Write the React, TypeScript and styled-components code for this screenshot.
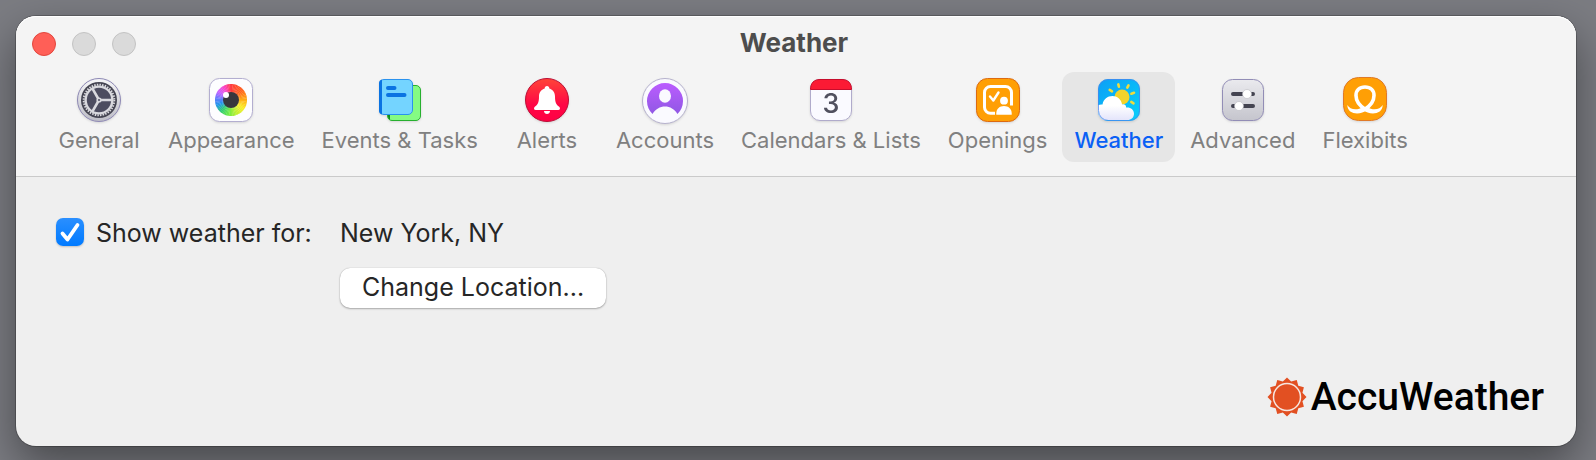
import React from "react";
import styled, { createGlobalStyle } from "styled-components";

const GlobalStyle = createGlobalStyle`
  * { box-sizing: border-box; }
  body {
    margin: 0;
    background: #7b7c82;
    font-family: Inter, "Liberation Sans", sans-serif;
  }
`;

const Desktop = styled.div`
  display: flex;
  min-height: 100vh;
  padding: 16px 20px 14px 16px;
  overflow: hidden;
`;

const Window = styled.main`
  flex: 1;
  display: flex;
  flex-direction: column;
  border-radius: 20px;
  background: #efefef;
  box-shadow: 0 0 0 1px rgba(0, 0, 0, 0.22), 0 18px 44px rgba(0, 0, 0, 0.42);
`;

const Header = styled.header`
  border-radius: 20px 20px 0 0;
  border-bottom: 1px solid #cacaca;
  background: #f4f4f4;
  box-shadow: inset 0 1px 0 #ffffff;
  padding-bottom: 14px;
`;

const TitleBar = styled.div`
  display: grid;
  grid-template-columns: 1fr auto 1fr;
  align-items: center;
  height: 56px;
  padding: 0 20px 0 16px;
`;

const Lights = styled.div`
  display: flex;
  gap: 16px;
`;

const Light = styled.button<{ $close?: boolean }>`
  width: 24px;
  height: 24px;
  padding: 0;
  border-radius: 50%;
  border: 1px solid ${(p) => (p.$close ? "#e2463d" : "#c3c3c3")};
  background: ${(p) => (p.$close ? "#ff5f57" : "#dadada")};
`;

const Title = styled.h1`
  margin: 0;
  font-size: 26px;
  line-height: 32px;
  font-weight: 700;
  color: #4d4d4d;
  padding-bottom: 2px;
`;

const Tabs = styled.nav`
  display: flex;
  gap: 3px;
  padding: 0 29px;
`;

const Tab = styled.button<{ $active?: boolean }>`
  display: flex;
  flex-direction: column;
  align-items: center;
  gap: 4px;
  min-width: 108px;
  padding: 6px 12px 8px;
  border: 0;
  border-radius: 12px;
  background: ${(p) => (p.$active ? "#e6e6e6" : "transparent")};
  color: ${(p) => (p.$active ? "#0a60f5" : "#808080")};
  font-family: inherit;
  font-size: 22px;
  font-weight: ${(p) => (p.$active ? 500 : 400)};
  line-height: 28px;
  white-space: nowrap;
`;

const Icon = styled.svg`
  display: block;
  width: 44px;
  height: 44px;
  overflow: visible;
  filter: drop-shadow(0 1px 1px rgba(0, 0, 0, 0.12));
`;

const Content = styled.section`
  flex: 1;
  display: flex;
  flex-direction: column;
  justify-content: space-between;
  padding: 36px 32px 29px 40px;
`;

const Settings = styled.div`
  display: grid;
  grid-template-columns: 284px auto;
  justify-content: start;
  row-gap: 15px;
  font-size: 25px;
  line-height: 40px;
  color: #262626;
`;

const CheckLabel = styled.label`
  display: flex;
  align-items: center;
  gap: 12px;
  white-space: nowrap;
`;

const Check = styled.span`
  display: grid;
  width: 28px;
  height: 28px;
  margin-bottom: 2px;
  & > * { grid-area: 1 / 1; }
  & > svg { pointer-events: none; }
`;

const CheckInput = styled.input`
  appearance: none;
  margin: 0;
  width: 28px;
  height: 28px;
  border-radius: 7px;
  background: #ffffff;
  box-shadow: 0 1px 2px rgba(0, 0, 0, 0.2);
  &:checked { background: linear-gradient(#2a8fff, #007aff); }
`;

const Place = styled.span`
  white-space: nowrap;
`;

const PushButton = styled.button`
  grid-column: 2;
  height: 40px;
  padding: 0 22px 2px;
  border: 0;
  border-radius: 10px;
  background: #ffffff;
  box-shadow: 0 0 1px rgba(0, 0, 0, 0.3), 0 1px 2px rgba(0, 0, 0, 0.28);
  color: #262626;
  font-family: inherit;
  font-size: 25px;
  line-height: 38px;
  white-space: nowrap;
`;

const Brand = styled.div`
  align-self: flex-end;
  display: flex;
  align-items: center;
  gap: 4px;
  font-family: Roboto, sans-serif;
  font-size: 39px;
  font-weight: 500;
  line-height: 40px;
  color: #000000;
`;

const mixStops: [number, number[]][] = [
  [0, [255, 60, 60]],
  [50, [255, 100, 30]],
  [90, [255, 175, 20]],
  [125, [250, 238, 40]],
  [160, [185, 240, 50]],
  [190, [110, 235, 70]],
  [220, [50, 205, 110]],
  [250, [30, 150, 235]],
  [280, [110, 120, 255]],
  [305, [205, 95, 255]],
  [335, [255, 65, 190]],
  [360, [255, 60, 60]],
];

function hueAt(angle: number) {
  const i = mixStops.findIndex(([a], n) => n > 0 && angle <= a);
  const [a0, c0] = mixStops[i - 1];
  const [a1, c1] = mixStops[i];
  const t = (angle - a0) / (a1 - a0);
  return `rgb(${c0.map((v, n) => Math.round(v + (c1[n] - v) * t)).join(",")})`;
}

function wedge(angle: number, step: number) {
  const point = (deg: number) => {
    const r = ((deg - 90) * Math.PI) / 180;
    return `${(22 + 16 * Math.cos(r)).toFixed(2)} ${(22 + 16 * Math.sin(r)).toFixed(2)}`;
  };
  return `M22 22L${point(angle)}A16 16 0 0 1 ${point(angle + step + 1)}Z`;
}

function starPoints(count: number, outer: number, inner: number) {
  return Array.from({ length: count * 2 }, (_, i) => {
    const r = i % 2 ? inner : outer;
    const a = (i * Math.PI) / count - Math.PI / 2;
    return `${(20 + r * Math.cos(a)).toFixed(2)},${(20 + r * Math.sin(a)).toFixed(2)}`;
  }).join(" ");
}

const GeneralIcon = () => (
  <Icon viewBox="0 0 44 44" aria-hidden>
    <defs>
      <linearGradient id="metal" x1="0" y1="0" x2="0" y2="1">
        <stop offset="0" stopColor="#f6f6f8" />
        <stop offset="1" stopColor="#bdbdc6" />
      </linearGradient>
    </defs>
    <circle cx="22" cy="22" r="21.5" fill="url(#metal)" stroke="#8d88b4" />
    <circle cx="22" cy="22" r="18" fill="#454552" />
    <circle cx="22" cy="22" r="15.3" fill="none" stroke="#d9d9de" strokeWidth="2" strokeDasharray="1.5 1.17" />
    <circle cx="22" cy="22" r="13.4" fill="#4d4d60" stroke="#d9d9de" strokeWidth="2.4" />
    <path d="M22 22H35M22 22L15.5 10.7M22 22L15.5 33.3" stroke="#d9d9de" strokeWidth="2.6" />
    <circle cx="22" cy="22" r="2.6" fill="#d9d9de" />
    <circle cx="22" cy="22" r="1" fill="#4d4d60" />
  </Icon>
);

const AppearanceIcon = () => (
  <Icon viewBox="0 0 44 44" aria-hidden>
    <rect x="0.5" y="0.5" width="43" height="43" rx="10" fill="#fdfdff" stroke="#b3aed0" />
    {Array.from({ length: 60 }, (_, i) => (
      <path key={i} d={wedge(i * 6, 6)} fill={hueAt(i * 6 + 3)} />
    ))}
    <circle cx="22" cy="22" r="8" fill="#38373d" />
    <circle cx="17" cy="17" r="3" fill="#ffffff" />
  </Icon>
);

const EventsIcon = () => (
  <Icon viewBox="0 0 44 44" aria-hidden>
    <rect x="9.5" y="7.5" width="33" height="35" rx="4.5" fill="#84fb83" stroke="#27b02f" />
    <path d="M12 8.5v33c-1.5-.6-2-2-2-3V11z" fill="#108a1c" />
    <rect x="1.5" y="1.5" width="33" height="35" rx="4.5" fill="#74d4ff" stroke="#2a92ee" />
    <path d="M4 1.5v35c-2-.3-3-1.8-3-4V5.5c0-2.2 1-3.7 3-4z" fill="#0a73e2" />
    <path d="M10 10h6.5M10 17h16.5" stroke="#0a73e2" strokeWidth="4" strokeLinecap="round" />
  </Icon>
);

const AlertsIcon = () => (
  <Icon viewBox="0 0 44 44" aria-hidden>
    <defs>
      <linearGradient id="alert" x1="0" y1="0" x2="0" y2="1">
        <stop offset="0" stopColor="#ff4538" />
        <stop offset="0.6" stopColor="#ff0745" />
        <stop offset="1" stopColor="#ff0045" />
      </linearGradient>
    </defs>
    <circle cx="22" cy="22" r="21.5" fill="url(#alert)" stroke="#bb0d35" />
    <path
      d="M22 8c1.5 0 2.3 1 2.3 2.4 3.7 1.2 5.7 4.2 5.7 8 0 6.6 1.4 8.1 4.2 10.3 1.3 1 1 3.3-.9 3.3H10.700c-1.9 0-2.2-2.3-.9-3.3 2.8-2.2 4.2-3.7 4.2-10.3 0-3.8 2-6.8 5.7-8C19.700 9 20.500 8 22 8z"
      fill="#ffffff"
    />
    <path d="M19 33h6c0 4-6 4-6 0z" fill="#ffffff" />
  </Icon>
);

const AccountsIcon = () => (
  <Icon viewBox="0 0 44 44" aria-hidden>
    <defs>
      <linearGradient id="account" x1="0" y1="0" x2="0" y2="1">
        <stop offset="0" stopColor="#bb5cff" />
        <stop offset="1" stopColor="#9058e4" />
      </linearGradient>
    </defs>
    <circle cx="22" cy="23" r="22.5" fill="#fafaff" stroke="#b5b1cc" />
    <path d="M9.5 36A18 18 0 1 1 34.5 36C31.5 31 27 28.5 22 28.5S12.5 31 9.5 36z" fill="url(#account)" />
    <ellipse cx="22" cy="18" rx="6" ry="6.8" fill="#fafaff" />
  </Icon>
);

const CalendarIcon = () => (
  <Icon viewBox="0 0 44 44" aria-hidden>
    <rect x="1.5" y="1.5" width="41" height="41" rx="9.5" fill="#fafaff" stroke="#b0abcb" />
    <path d="M1.5 11.5C1.5 5 5 1.5 11 1.5H33c6 0 9.5 3.5 9.5 10z" fill="#fb1a34" stroke="#c70d2c" />
    <text x="22" y="35" textAnchor="middle" fontSize="27" fontWeight="500" fill="#51515f">
      3
    </text>
  </Icon>
);

const OpeningsIcon = () => (
  <Icon viewBox="0 0 44 44" aria-hidden>
    <rect x="0.5" y="0.5" width="43" height="43" rx="11" fill="#ff9f05" stroke="#dd6a10" />
    <path
      d="M19 35.3H14.5a6 6 0 0 1-6-6V14.5a6 6 0 0 1 6-6H29.5a6 6 0 0 1 6 6V27.5"
      fill="none"
      stroke="#ffffff"
      strokeWidth="3"
    />
    <path d="M14 18.5l3.3 4 5.2-8" fill="none" stroke="#ffffff" strokeWidth="2.4" strokeLinecap="round" strokeLinejoin="round" />
    <circle cx="28" cy="22.7" r="3.9" fill="#ffffff" />
    <path d="M20.3 36.8v-1.5c0-4.5 3.4-7.3 7.7-7.3s7.7 2.8 7.7 7.3v1.5z" fill="#ffffff" />
  </Icon>
);

const WeatherIcon = () => (
  <Icon viewBox="0 0 44 44" aria-hidden>
    <defs>
      <linearGradient id="sky" x1="0" y1="0" x2="1" y2="1">
        <stop offset="0" stopColor="#0c9ff5" />
        <stop offset="1" stopColor="#08d0fb" />
      </linearGradient>
      <linearGradient id="cloud" x1="0" y1="0" x2="0" y2="1">
        <stop offset="0.4" stopColor="#ffffff" />
        <stop offset="1" stopColor="#e4e5fb" />
      </linearGradient>
      <clipPath id="tile">
        <rect x="1" y="1" width="42" height="42" rx="10" />
      </clipPath>
    </defs>
    <rect x="1" y="1" width="42" height="42" rx="10" fill="url(#sky)" />
    <circle cx="25" cy="19" r="7.5" fill="#f3d32b" />
    <path
      d="M21.3 6.4l.6 2.4M31.5 7.3l-1.2 2.3M37 14.8l-2.6.9M36.5 25.300l-2.2-1.4M12.700 11.900l2.3 1.5"
      stroke="#f1dc3c"
      strokeWidth="2.6"
      strokeLinecap="round"
    />
    <path
      clipPath="url(#tile)"
      d="M0 28c2-1.6 4-1.8 5.5-1.5C6.5 21 10.5 18 15.5 18c4.700 0 8.600 3 9.600 8.500 1-.4 2-.3 2.8.3 1 .7 1.2 1.7 1.2 2.7 4.5-.5 7.9 2.2 7.9 6.2 0 3.800-2.800 6.300-6.500 6.300H0z"
      fill="url(#cloud)"
    />
    <rect x="1.5" y="1.5" width="41" height="41" rx="10" fill="none" stroke="#4a86ee" strokeOpacity="0.75" />
  </Icon>
);

const AdvancedIcon = () => (
  <Icon viewBox="0 0 44 44" aria-hidden>
    <defs>
      <linearGradient id="panel" x1="0" y1="0" x2="0" y2="1">
        <stop offset="0" stopColor="#eaeaee" />
        <stop offset="1" stopColor="#c5c5cd" />
      </linearGradient>
    </defs>
    <rect x="1.5" y="1.5" width="41" height="41" rx="10" fill="url(#panel)" stroke="#928db6" />
    <path d="M12 16h20M12 28h20" stroke="#444451" strokeWidth="4" strokeLinecap="round" />
    <circle cx="26" cy="16" r="4.5" fill="#ffffff" stroke="#b8b8c0" strokeWidth="0.6" />
    <circle cx="18" cy="28" r="4.5" fill="#ffffff" stroke="#b8b8c0" strokeWidth="0.6" />
  </Icon>
);

const FlexibitsIcon = () => (
  <Icon viewBox="0 0 44 44" aria-hidden>
    <rect x="0.5" y="-0.5" width="43" height="43" rx="15" fill="#ff9f05" stroke="#e07a28" />
    <path
      d="M21.5 31.5C28 27.5 31 22.5 31 17.5C31 12.5 27.5 9 22 9S13 12.5 13 17.5C13 22.5 16 27.5 22.5 31.5"
      fill="none"
      stroke="#ffffff"
      strokeWidth="3.6"
    />
    <path d="M4.3 27C7 31.5 13.5 33 20 29L24 32C17.5 37.500 4.5 37 4.3 27z" fill="#ffffff" />
    <path d="M39.7 27C37 31.5 30.5 33 24 29L20 32C26.5 37.500 39.5 37 39.7 27z" fill="#ffffff" />
  </Icon>
);

const SunLogo = styled.svg`
  display: block;
  width: 40px;
  height: 40px;
`;

const tabs = [
  { label: "General", Glyph: GeneralIcon },
  { label: "Appearance", Glyph: AppearanceIcon },
  { label: "Events & Tasks", Glyph: EventsIcon },
  { label: "Alerts", Glyph: AlertsIcon },
  { label: "Accounts", Glyph: AccountsIcon },
  { label: "Calendars & Lists", Glyph: CalendarIcon },
  { label: "Openings", Glyph: OpeningsIcon },
  { label: "Weather", Glyph: WeatherIcon },
  { label: "Advanced", Glyph: AdvancedIcon },
  { label: "Flexibits", Glyph: FlexibitsIcon },
];

export default function App() {
  return (
    <>
      <GlobalStyle />
      <Desktop>
        <Window>
          <Header>
            <TitleBar>
              <Lights>
                <Light $close aria-label="Close" />
                <Light aria-label="Minimize" disabled />
                <Light aria-label="Zoom" disabled />
              </Lights>
              <Title>Weather</Title>
            </TitleBar>
            <Tabs>
              {tabs.map(({ label, Glyph }) => (
                <Tab key={label} type="button" $active={label === "Weather"}>
                  <Glyph />
                  {label}
                </Tab>
              ))}
            </Tabs>
          </Header>
          <Content>
            <Settings>
              <CheckLabel htmlFor="show-weather">
                <Check>
                  <CheckInput id="show-weather" type="checkbox" defaultChecked />
                  <svg viewBox="0 0 28 28" width="28" height="28" aria-hidden>
                    <path d="M6.5 15.5l5 6L21.5 7" fill="none" stroke="#ffffff" strokeWidth="3.8" strokeLinecap="round" strokeLinejoin="round" />
                  </svg>
                </Check>
                Show weather for:
              </CheckLabel>
              <Place>New York, NY</Place>
              <PushButton type="button">Change Location...</PushButton>
            </Settings>
            <Brand>
              <SunLogo viewBox="0 0 40 40" aria-hidden>
                <polygon points={starPoints(12, 19.5, 16)} fill="#e25022" />
                <circle cx="20" cy="20" r="13.5" fill="#e25022" stroke="#f6e6df" strokeWidth="1.5" />
              </SunLogo>
              AccuWeather
            </Brand>
          </Content>
        </Window>
      </Desktop>
    </>
  );
}
